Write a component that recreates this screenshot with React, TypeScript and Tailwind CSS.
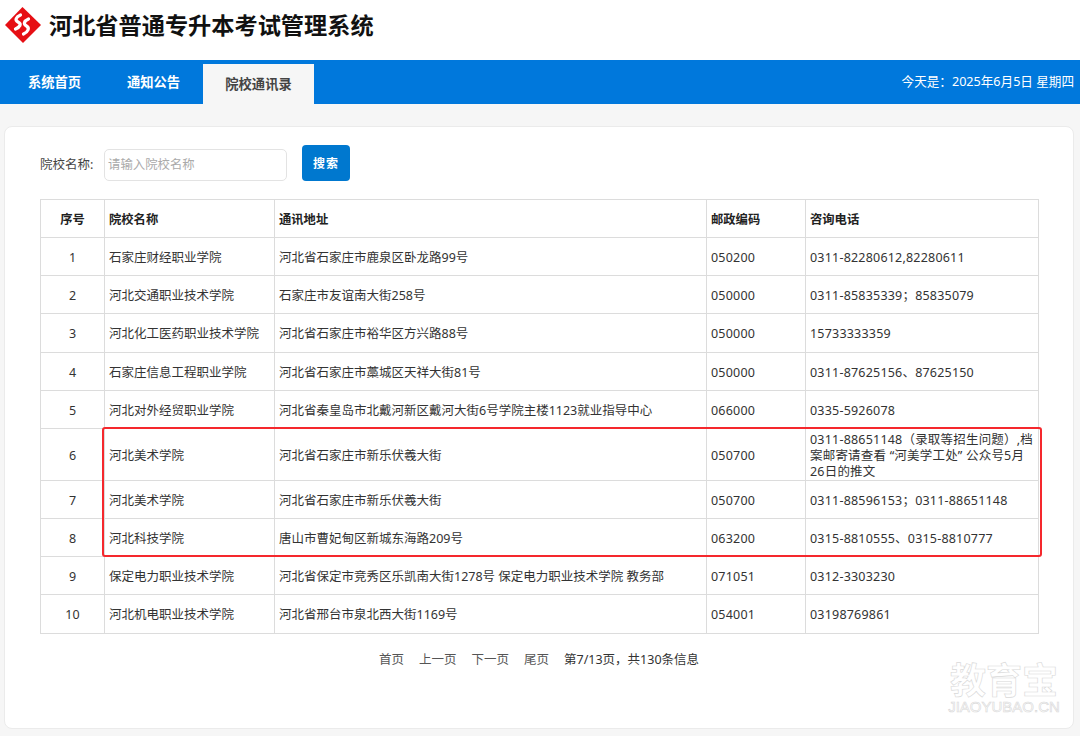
import React from "react";

const rows = [
  ["1", "石家庄财经职业学院", "河北省石家庄市鹿泉区卧龙路99号", "050200", "0311-82280612,82280611"],
  ["2", "河北交通职业技术学院", "石家庄市友谊南大街258号", "050000", "0311-85835339；85835079"],
  ["3", "河北化工医药职业技术学院", "河北省石家庄市裕华区方兴路88号", "050000", "15733333359"],
  ["4", "石家庄信息工程职业学院", "河北省石家庄市藁城区天祥大街81号", "050000", "0311-87625156、87625150"],
  ["5", "河北对外经贸职业学院", "河北省秦皇岛市北戴河新区戴河大街6号学院主楼1123就业指导中心", "066000", "0335-5926078"],
  ["6", "河北美术学院", "河北省石家庄市新乐伏羲大街", "050700", "0311-88651148（录取等招生问题）,档\n案邮寄请查看 “河美学工处” 公众号5月\n26日的推文"],
  ["7", "河北美术学院", "河北省石家庄市新乐伏羲大街", "050700", "0311-88596153；0311-88651148"],
  ["8", "河北科技学院", "唐山市曹妃甸区新城东海路209号", "063200", "0315-8810555、0315-8810777"],
  ["9", "保定电力职业技术学院", "河北省保定市竞秀区乐凯南大街1278号 保定电力职业技术学院 教务部", "071051", "0312-3303230"],
  ["10", "河北机电职业技术学院", "河北省邢台市泉北西大街1169号", "054001", "03198769861"],
];

const heads = ["院校名称", "通讯地址", "邮政编码", "咨询电话"];

const rowHeight: Record<string, string> = {
  "3": "h-[39px]",
  "6": "h-[52px]",
  "10": "h-[39px]",
};

export default function App() {
  return (
    <div className="relative h-[736px] w-[1080px] overflow-hidden bg-[#f6f6f6] font-['Noto_Sans','Noto_Sans_CJK_SC',sans-serif] text-[12.5px] text-[#333]">
      <header className="flex h-[60px] items-center gap-[8px] bg-white pl-[5px] pb-[10px]">
        <svg width="36" height="36" viewBox="0 0 36 36" className="shrink-0">
          <path d="M17.5 0 L36 18 L18 36 L0 18 Z" fill="#e60f14" />
          <path d="M15.5 8 C11 10 9.5 13 13 15 C17 17 15 20 10.5 22" fill="none" stroke="#fff" strokeWidth="3.2" strokeLinecap="round" />
          <path d="M23.5 12 C19 14 18 17 21.5 19 C25 21 23 25 18.5 27" fill="none" stroke="#fff" strokeWidth="3.2" strokeLinecap="round" />
        </svg>
        <h1 className="pt-[2px] text-[23.2px] font-bold leading-none text-[#111]">河北省普通专升本考试管理系统</h1>
      </header>

      <nav className="flex h-[44px] items-end bg-[#0078dc] text-white">
        <a className="flex h-[44px] w-[108px] items-center justify-center pl-[1px] pt-[1px] text-[13.3px] font-bold">系统首页</a>
        <a className="flex h-[44px] w-[95px] items-center justify-center pr-[10px] pl-[6px] pt-[1px] text-[13.3px] font-bold">通知公告</a>
        <a className="flex h-[40px] w-[111px] items-center justify-center bg-[#f6f6f6] pt-[1px] text-[13.3px] font-bold text-[#444]">院校通讯录</a>
        <div className="ml-auto flex h-[44px] items-center pr-[6px] pt-[1px] text-[12.6px]">今天是：2025年6月5日 星期四</div>
      </nav>

      <main className="relative mx-[4px] mt-[22px] h-[603px] w-[1070px] rounded-[8px] border border-[#ebebeb] bg-white pl-[35px]">
        <div className="flex h-[72px] items-start pt-[18px]">
          <label className="mt-[11px] w-[64px] text-[12.5px] text-[#444]">院校名称:</label>
          <div className="mt-[4px] flex h-[32px] w-[183px] items-center rounded-[5px] border border-[#e3e3e3] pl-[3px] text-[12.4px] text-[#aaa]">请输入院校名称</div>
          <button className="ml-[15px] h-[36px] w-[48px] rounded-[4px] bg-[#0078cf] pt-[2px] text-[12px] font-bold tracking-[1px] text-white">搜索</button>
        </div>

        <table className="w-[998px] table-fixed border-collapse border border-[#dcdcdc]">
          <colgroup>
            <col className="w-[64px]" />
            <col className="w-[170px]" />
            <col className="w-[432px]" />
            <col className="w-[99px]" />
            <col className="w-[233px]" />
          </colgroup>
          <thead>
            <tr className="h-[38px]">
              <th className="border border-[#dcdcdc] pt-[3px] text-center text-[12.3px] font-bold text-[#222]">序号</th>
              {heads.map((h) => (
                <th key={h} className="border border-[#dcdcdc] px-[4px] pt-[3px] text-left text-[12.3px] font-bold text-[#222]">{h}</th>
              ))}
            </tr>
          </thead>
          <tbody>
            {rows.map((r) => (
              <tr key={r[0]} className={rowHeight[r[0]] ?? "h-[38px]"}>
                <td className="border border-[#dcdcdc] pt-[2px] text-center leading-[16px]">{r[0]}</td>
                <td className="border border-[#dcdcdc] px-[4px] pt-[2px] leading-[16px]">{r[1]}</td>
                <td className="border border-[#dcdcdc] px-[4px] pt-[2px] leading-[16px]">{r[2]}</td>
                <td className="border border-[#dcdcdc] px-[4px] pt-[2px] leading-[16px] tracking-[0.2px]">{r[3]}</td>
                <td className="whitespace-pre-line border border-[#dcdcdc] px-[4px] pt-[2px] leading-[16px] tracking-[0.2px]">{r[4]}</td>
              </tr>
            ))}
          </tbody>
        </table>

        <div className="mt-[17px] flex w-[998px] justify-center gap-[15px] text-[12.5px] text-[#555]">
          <a>首页</a>
          <a>上一页</a>
          <a>下一页</a>
          <a>尾页</a>
          <span className="text-[#333]">第7/13页，共130条信息</span>
        </div>

        <div className="absolute left-[97px] top-[300px] h-[130px] w-[940px] rounded-[3px] border-2 border-[#f5282d]" />

        <div className="absolute left-[944px] top-[536px] flex w-[110px] flex-col items-center text-transparent [-webkit-text-stroke:0.6px_#d8d8d8]">
          <span className="text-[36px] font-bold leading-[36px]">教育宝</span>
          <span className="whitespace-nowrap font-['Liberation_Sans',sans-serif] text-[15px] leading-[15px]">JIAOYUBAO.CN</span>
        </div>
      </main>
    </div>
  );
}
